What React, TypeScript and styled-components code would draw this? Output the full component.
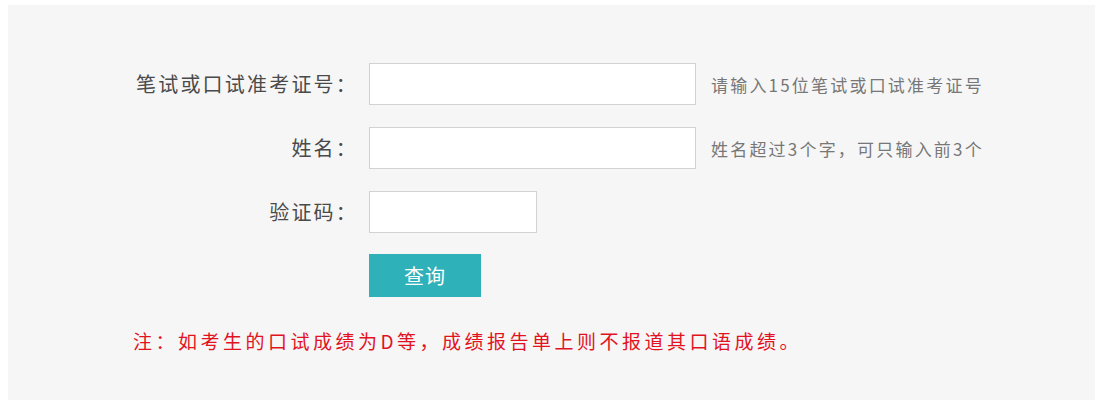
import { FunctionComponent } from "react";
import styled, { createGlobalStyle } from "styled-components";

const GlobalStyle = createGlobalStyle`
  html, body {
    margin: 0;
    padding: 0;
    background: #ffffff;
  }
  body {
    font-family: "Noto Sans CJK SC", "Noto Sans", sans-serif;
  }
`;

interface FieldProps {
  label: string;
  width: number;
  hint?: string;
}

const Field: FunctionComponent<FieldProps> = ({ label, width, hint }) => (
  <>
    <Label>{label}</Label>
    <FieldCell>
      <TextInput type="text" $width={width} />
      {hint && <Hint>{hint}</Hint>}
    </FieldCell>
  </>
);

const App: FunctionComponent = () => {
  return (
    <>
      <GlobalStyle />
      <Panel>
        <Form onSubmit={e => e.preventDefault()}>
          <Field label="笔试或口试准考证号：" width={327} hint="请输入15位笔试或口试准考证号" />
          <Field label="姓名：" width={327} hint="姓名超过3个字，可只输入前3个" />
          <Field label="验证码：" width={168} />
          <span />
          <FieldCell>
            <SubmitButton type="submit">查询</SubmitButton>
          </FieldCell>
        </Form>
        <Note>注：如考生的口试成绩为D等，成绩报告单上则不报道其口语成绩。</Note>
      </Panel>
    </>
  );
};

const Panel = styled.section`
  margin: 5px 2px 0 8px;
  min-height: 395px;
  box-sizing: border-box;
  padding: 58px 0 0 125px;
  background: #f6f6f6;
`;

const Form = styled.form`
  display: grid;
  grid-template-columns: 219px auto;
  column-gap: 17px;
  row-gap: 22px;
  align-items: center;
`;

const Label = styled.label`
  font-size: 20px;
  letter-spacing: 2.2px;
  line-height: 42px;
  color: #4a4a4a;
  text-align: right;
  white-space: nowrap;
  margin-right: -6px;
`;

const FieldCell = styled.div`
  display: flex;
  align-items: center;
  gap: 15px;
`;

const TextInput = styled.input<{ $width: number }>`
  width: ${p => p.$width}px;
  height: 42px;
  box-sizing: border-box;
  border: 1px solid #d2d2d2;
  background: #ffffff;
  outline: none;
  padding: 0 8px;
  font-size: 16px;
`;

const Hint = styled.span`
  font-size: 17px;
  letter-spacing: 2.2px;
  color: #777777;
  white-space: nowrap;
`;

const SubmitButton = styled.button`
  width: 112px;
  height: 43px;
  margin-top: -1px;
  border: none;
  background: #2fb1b9;
  color: #ffffff;
  font-family: "Noto Sans CJK SC", sans-serif;
  font-size: 20px;
  letter-spacing: 1px;
  cursor: pointer;
`;

const Note = styled.p`
  margin: 32px 0 0 0;
  font-size: 19px;
  line-height: 24px;
  letter-spacing: 3.5px;
  color: #e2131f;
  white-space: nowrap;
`;

export default App;
